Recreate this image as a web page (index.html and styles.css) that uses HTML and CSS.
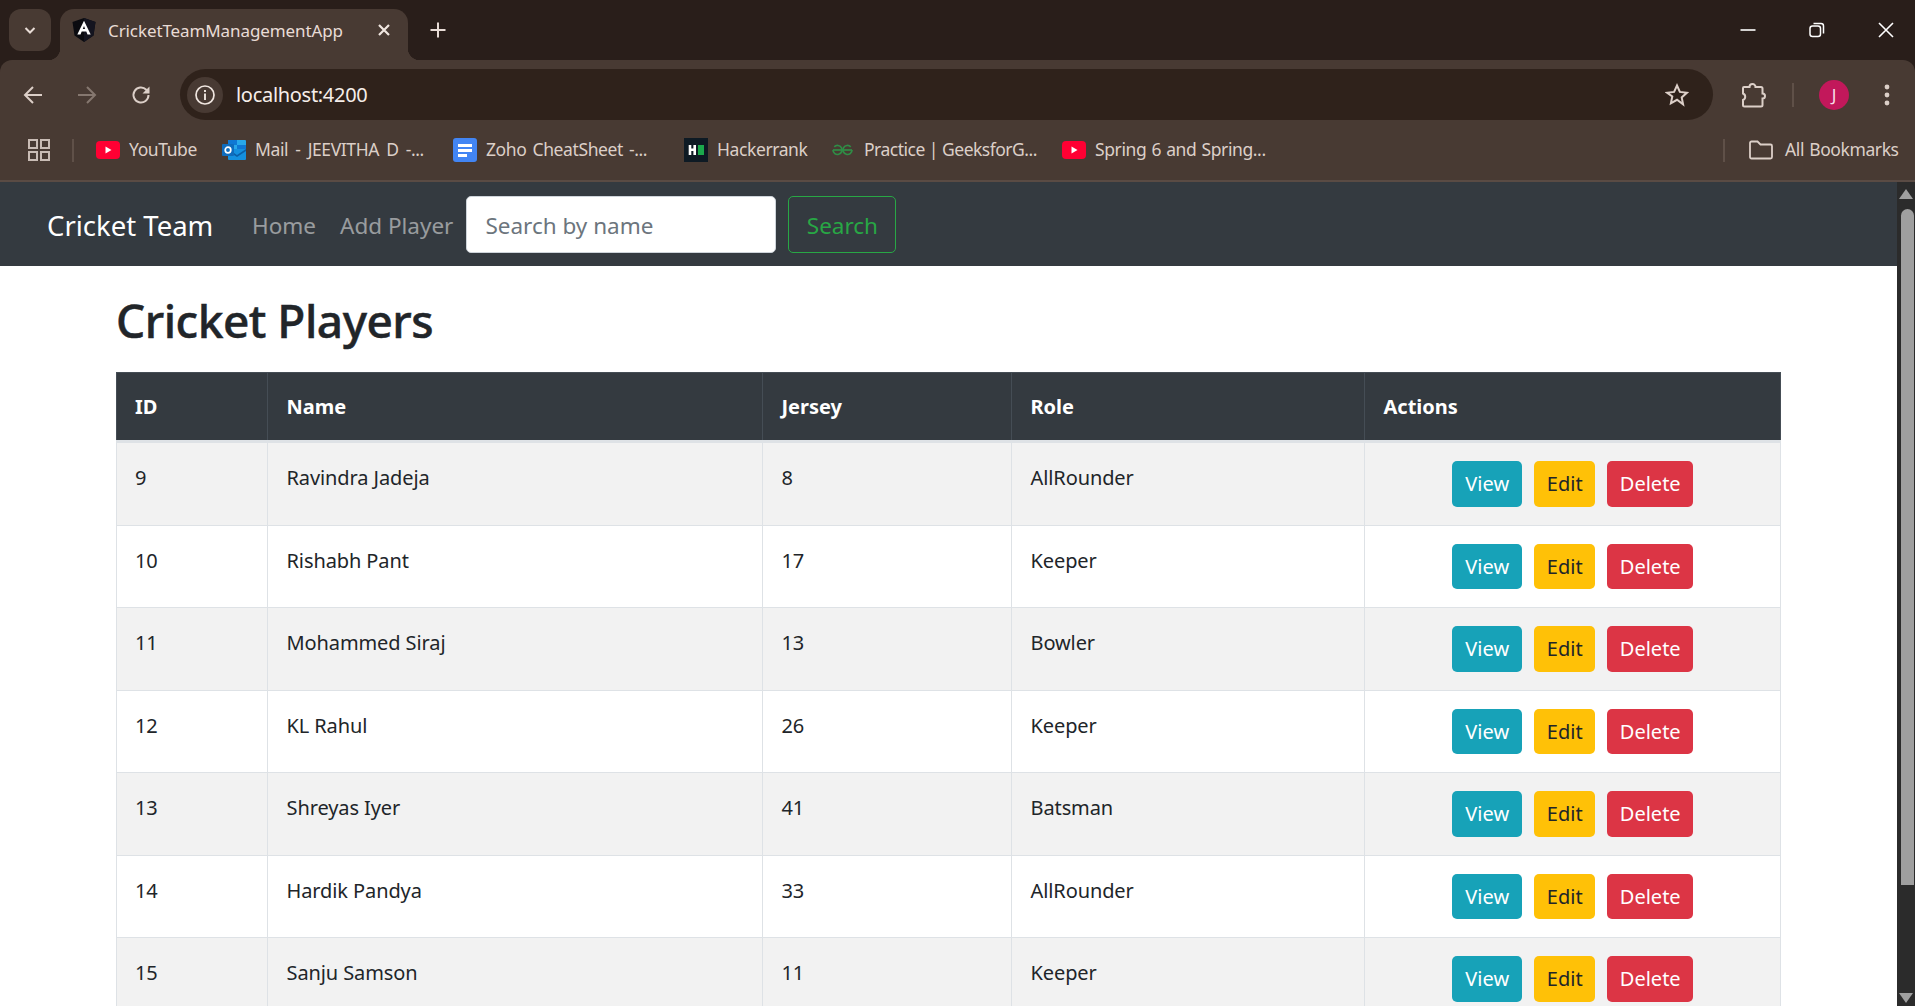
FILE: index.html
```html
<!DOCTYPE html>
<html lang="en">
<head>
    <meta charset="utf-8">
    <title>CricketTeamManagementApp</title>
    <link rel="stylesheet" href="styles.css">
</head>
<body>
<div class="tabstrip">
    <div class="tabsearch">
        <svg width="16" height="16" viewBox="0 0 16 16"><path d="M3.5 6l4.5 4.5L12.500 6" fill="none" stroke="#e8dcd6" stroke-width="2"/></svg>
    </div>
    <div class="tab">
        <svg class="tabicon" width="24" height="24" viewBox="0 0 24 24"><path d="M12 0L23.500 4l-2 13.500L12 24l-9.500-6.500L.5 4z" fill="#0b0b10"/><path d="M12 0L23.500 4l-2 13.500L12 24z" fill="#14141f"/><path d="M12 2.700L5.300 16.500h3.200l1.200-3h4.600l1.200 3h3.200zM10.800 11L12 8l1.200 3z" fill="#fff"/></svg>
        <span class="tabtitle">CricketTeamManagementApp</span>
        <svg class="tabclose" width="14" height="14" viewBox="0 0 14 14"><path d="M2 2l10 10M12 2L2 12" stroke="#f0e6e0" stroke-width="2.200"/></svg>
    </div>
    <svg class="newtab" width="18" height="18" viewBox="0 0 18 18"><path d="M9 1.500v15M1.500 9h15" stroke="#e8dcd6" stroke-width="2"/></svg>
    <div class="winbtns">
        <svg width="16" height="16" viewBox="0 0 16 16"><path d="M0.500 8h15" stroke="#fff" stroke-width="1.600"/></svg>
        <svg width="16" height="16" viewBox="0 0 16 16"><rect x="1" y="4" width="10.500" height="10.500" rx="2.500" fill="none" stroke="#fff" stroke-width="1.500"/><path d="M4.500 1.500h7.500a2.500 2.500 0 0 1 2.500 2.500v7.500" fill="none" stroke="#fff" stroke-width="1.500"/></svg>
        <svg width="16" height="16" viewBox="0 0 16 16"><path d="M1 1l14 14M15 1L1 15" stroke="#fff" stroke-width="1.600"/></svg>
    </div>
</div>

<div class="toolbar">
    <div class="navrow">
        <svg class="navicon back" width="22" height="22" viewBox="0 0 22 22"><path d="M20 11H3M11 3l-8 8 8 8" fill="none" stroke="#dccfc8" stroke-width="2"/></svg>
        <svg class="navicon fwd" width="22" height="22" viewBox="0 0 22 22"><path d="M2 11h17M11 3l8 8-8 8" fill="none" stroke="#85776f" stroke-width="2"/></svg>
        <svg class="navicon reload" width="22" height="22" viewBox="0 0 22 22"><path d="M18.500 11a7.500 7.500 0 1 1-2.200-5.300L18.500 8" fill="none" stroke="#dccfc8" stroke-width="2"/><path d="M19.500 2.500v7h-7z" fill="#dccfc8"/></svg>
        <div class="omnibox">
            <div class="infochip">
                <svg width="22" height="22" viewBox="0 0 22 22"><circle cx="11" cy="11" r="9" fill="none" stroke="#f0e6e0" stroke-width="1.700"/><path d="M11 9.500v6.500M11 6v2" stroke="#f0e6e0" stroke-width="1.900"/></svg>
            </div>
            <span class="url">localhost:4200</span>
            <svg class="star" width="24" height="24" viewBox="0 0 24 24"><path d="M12 2.500l2.900 6.400 7 .8-5.200 4.700 1.400 6.900L12 16.800l-6.100 3.500 1.400-6.900L2.100 9.700l7-.8z" fill="none" stroke="#dccfc8" stroke-width="2"/></svg>
        </div>
        <svg class="puzzle" width="26" height="26" viewBox="0 0 26 26"><path d="M4 5h5.500a3 3 0 0 1 6 0H21a1.500 1.500 0 0 1 1.500 1.500v5a2.500 2.500 0 0 1 0 5V23a1.500 1.500 0 0 1-1.500 1.500H4.500A1.500 1.500 0 0 1 3 23v-5a3.500 3.500 0 0 0 0-6.500V6A1 1 0 0 1 4 5z" fill="none" stroke="#dccfc8" stroke-width="2"/></svg>
        <span class="sep"></span>
        <div class="avatar">J</div>
        <svg class="kebab" width="6" height="24" viewBox="0 0 6 24"><circle cx="3" cy="4" r="2.400" fill="#dccfc8"/><circle cx="3" cy="12" r="2.400" fill="#dccfc8"/><circle cx="3" cy="20" r="2.400" fill="#dccfc8"/></svg>
    </div>
    <div class="bookmarks">
        <svg class="apps" width="22" height="22" viewBox="0 0 22 22"><g fill="none" stroke="#c9bcb5" stroke-width="2"><rect x="1" y="1" width="8" height="8"/><rect x="13" y="1" width="8" height="8"/><rect x="1" y="13" width="8" height="8"/><rect x="13" y="13" width="8" height="8"/></g></svg>
        <span class="sep short"></span>
        <div class="bm bm-yt">
            <svg width="24" height="18" viewBox="0 0 24 18"><rect width="24" height="18" rx="4" fill="#ff0033"/><path d="M9.500 5.500v7l6-3.500z" fill="#fff"/></svg>
            <span>YouTube</span>
        </div>
        <div class="bm bm-mail">
            <svg width="24" height="20" viewBox="0 0 24 20"><rect x="6" width="18" height="10" rx="1" fill="#28a8ea"/><rect x="6" width="9" height="5" fill="#0f78d4"/><rect x="15" y="5" width="9" height="5" fill="#0f78d4"/><path d="M6 9h18v10a1 1 0 0 1-1 1H7a1 1 0 0 1-1-1z" fill="#1490df"/><path d="M6 9l9 6 9-6v2l-9 6-9-6z" fill="#0a5fa8"/><rect y="4" width="12" height="12" rx="1" fill="#0f6cbd"/><circle cx="6" cy="10" r="2.800" fill="none" stroke="#fff" stroke-width="1.700"/></svg>
            <span>Mail - JEEVITHA D -...</span>
        </div>
        <div class="bm bm-zoho">
            <svg width="24" height="24" viewBox="0 0 24 24"><rect width="24" height="24" rx="3" fill="#4285f4"/><path d="M5 6h14v3H5zM5 11h14v3H5zM5 16h9v3H5z" fill="#fff"/></svg>
            <span>Zoho CheatSheet -...</span>
        </div>
        <div class="bm bm-hr">
            <svg width="24" height="24" viewBox="0 0 24 24"><rect width="24" height="24" fill="#0e1a24"/><path d="M4.700 7h2.600v3.500h2.100V7H12v10H9.400v-4H7.300v4H4.700z" fill="#fff"/><rect x="14" y="7" width="6" height="10" fill="#1ba94c"/></svg>
            <span>Hackerrank</span>
        </div>
        <div class="bm bm-gfg">
            <svg width="21" height="12" viewBox="0 0 21 12"><g fill="none" stroke="#2f8d46" stroke-width="1.700"><path d="M2.300 2.800A4.500 4.500 0 1 1 1 6"/><path d="M18.700 2.800A4.500 4.500 0 1 0 20 6"/><path d="M1 6H20"/></g></svg>
            <span>Practice | GeeksforG...</span>
        </div>
        <div class="bm bm-spring">
            <svg width="24" height="18" viewBox="0 0 24 18"><rect width="24" height="18" rx="4" fill="#ff0033"/><path d="M9.500 5.500v7l6-3.500z" fill="#fff"/></svg>
            <span>Spring 6 and Spring...</span>
        </div>
        <span class="sep short allsep"></span>
        <div class="bm bm-all">
            <svg width="24" height="20" viewBox="0 0 24 20"><path d="M1 3a1.500 1.500 0 0 1 1.500-1.500h6l3 3h10A1.500 1.500 0 0 1 23 6v11a1.500 1.500 0 0 1-1.500 1.500h-19A1.500 1.500 0 0 1 1 17z" fill="none" stroke="#dccfc8" stroke-width="1.800"/></svg>
            <span>All Bookmarks</span>
        </div>
    </div>
</div>

<div class="viewport">
    <div class="page">
        <nav class="navbar">
            <a class="brand">Cricket Team</a>
            <a class="navlink">Home</a>
            <a class="navlink">Add Player</a>
            <form class="searchform" action="javascript:">
                <input class="searchinput" type="text" placeholder="Search by name">
                <button class="searchbtn" type="button">Search</button>
            </form>
        </nav>
        <div class="container">
            <h1 class="title">Cricket Players</h1>
            <table class="players">
                <colgroup>
                    <col class="c-id"><col class="c-name"><col class="c-jersey"><col class="c-role"><col class="c-actions">
                </colgroup>
                <thead>
                    <tr><th>ID</th><th>Name</th><th>Jersey</th><th>Role</th><th>Actions</th></tr>
                </thead>
                <tbody>
                    <tr>
                        <td>9</td><td>Ravindra Jadeja</td><td>8</td><td>AllRounder</td>
                        <td class="actions"><button class="btn info">View</button><button class="btn warn">Edit</button><button class="btn danger">Delete</button></td>
                    </tr>
                    <tr>
                        <td>10</td><td>Rishabh Pant</td><td>17</td><td>Keeper</td>
                        <td class="actions"><button class="btn info">View</button><button class="btn warn">Edit</button><button class="btn danger">Delete</button></td>
                    </tr>
                    <tr>
                        <td>11</td><td>Mohammed Siraj</td><td>13</td><td>Bowler</td>
                        <td class="actions"><button class="btn info">View</button><button class="btn warn">Edit</button><button class="btn danger">Delete</button></td>
                    </tr>
                    <tr>
                        <td>12</td><td>KL Rahul</td><td>26</td><td>Keeper</td>
                        <td class="actions"><button class="btn info">View</button><button class="btn warn">Edit</button><button class="btn danger">Delete</button></td>
                    </tr>
                    <tr>
                        <td>13</td><td>Shreyas Iyer</td><td>41</td><td>Batsman</td>
                        <td class="actions"><button class="btn info">View</button><button class="btn warn">Edit</button><button class="btn danger">Delete</button></td>
                    </tr>
                    <tr>
                        <td>14</td><td>Hardik Pandya</td><td>33</td><td>AllRounder</td>
                        <td class="actions"><button class="btn info">View</button><button class="btn warn">Edit</button><button class="btn danger">Delete</button></td>
                    </tr>
                    <tr>
                        <td>15</td><td>Sanju Samson</td><td>11</td><td>Keeper</td>
                        <td class="actions"><button class="btn info">View</button><button class="btn warn">Edit</button><button class="btn danger">Delete</button></td>
                    </tr>
                </tbody>
            </table>
        </div>
    </div>
    <div class="scrollbar">
        <span class="arrow up"></span>
        <span class="thumb"></span>
        <span class="arrow down"></span>
    </div>
</div>
</body>
</html>
```

FILE: styles.css
```css
*{
    box-sizing: border-box;
    padding: 0;
    margin: 0;
}
html, body{
    height: 100%;
    overflow: hidden;
}
body{
    display: flex;
    flex-direction: column;
    background: #291e1a;
    font-family: "Noto Sans", "Liberation Sans", sans-serif;
    color: #212529;
}

/* browser top */
.tabstrip{
    display: flex;
    align-items: flex-start;
    height: 60px;
    padding: 9px 0 0 9px;
    flex: none;
}
.tabsearch{
    display: flex;
    align-items: center;
    justify-content: center;
    width: 42px;
    height: 42px;
    border-radius: 12px;
    background: #483a33;
}
.tab{
    position: relative;
    display: flex;
    align-items: center;
    width: 348px;
    height: 51px;
    margin-left: 9px;
    padding: 0 0 9px 12px;
    background: #483a33;
    border-radius: 14px 14px 0 0;
}
.tab::before, .tab::after{
    content: "";
    position: absolute;
    bottom: 0;
    width: 12px;
    height: 12px;
}
.tab::before{
    left: -12px;
    background: radial-gradient(circle at 0 0, #291e1a 12px, #483a33 12.500px);
}
.tab::after{
    right: -12px;
    background: radial-gradient(circle at 100% 0, #291e1a 12px, #483a33 12.500px);
}
.tabtitle{
    margin-left: 12px;
    width: 269px;
    font-size: 17px;
    letter-spacing: -0.1px;
    color: #e8dcd6;
    white-space: nowrap;
}
.newtab{
    margin: 12px 0 0 21px;
}
.winbtns{
    display: flex;
    gap: 53px;
    margin: 13px 21px 0 auto;
}
.winbtns svg{
    flex: none;
}
.toolbar{
    flex: none;
    height: 122px;
    background: #483a33;
    border-radius: 12px 12px 0 0;
    border-bottom: 2px solid #5a4b44;
}
.navrow{
    display: flex;
    align-items: center;
    height: 69px;
}
.navicon{
    flex: none;
}
.back{
    margin-left: 22px;
}
.fwd{
    margin-left: 32px;
}
.reload{
    margin-left: 32px;
}
.omnibox{
    display: flex;
    align-items: center;
    width: 1533px;
    height: 51px;
    margin-left: 28px;
    padding: 0 24px 0 7px;
    background: #2f221b;
    border-radius: 26px;
}
.infochip{
    display: flex;
    align-items: center;
    justify-content: center;
    width: 36px;
    height: 36px;
    border-radius: 50%;
    background: #483a33;
}
.url{
    margin-left: 13px;
    font-size: 20px;
    letter-spacing: -0.3px;
    color: #f6eeea;
}
.star{
    margin-left: auto;
}
.puzzle{
    margin-left: 27px;
}
.sep{
    width: 2px;
    height: 24px;
    margin-left: 26px;
    background: #5f5048;
}
.avatar{
    display: flex;
    align-items: center;
    justify-content: center;
    width: 30px;
    height: 30px;
    margin-left: 25px;
    border-radius: 50%;
    background: #c2185b;
    color: #f8dfe8;
    font-size: 17px;
}
.kebab{
    margin-left: 35px;
}
.bookmarks{
    display: flex;
    align-items: center;
    height: 42px;
    padding-left: 28px;
    color: #dccfc8;
    font-size: 17.500px;
    letter-spacing: -0.4px;
    word-spacing: 2px;
}
.apps{
    flex: none;
}
.sep.short{
    height: 23px;
    margin-left: 22px;
}
.bm{
    display: flex;
    align-items: center;
    gap: 9px;
    flex: none;
    white-space: nowrap;
}
.bm svg{
    flex: none;
}
.bm span{
    padding-bottom: 2px;
}
.bm-yt{ width: 126px; margin-left: 22px; }
.bm-mail{ width: 231px; word-spacing: 3px; }
.bm-zoho{ width: 231px; }
.bm-hr{ width: 148px; }
.bm-gfg{ width: 230px; letter-spacing: -0.5px; word-spacing: 0; }
.bm-gfg svg{ margin-right: 2px; }
.bm-spring{ width: 203px; word-spacing: 1px; }
.sep.allsep{
    margin-left: 458px;
}
.bm-all{
    gap: 12px;
    margin-left: 24px;
    word-spacing: 1px;
}

/* page */
.viewport{
    flex: 1;
    display: flex;
    min-height: 0;
    background: #fff;
}
.page{
    flex: 1;
    min-width: 0;
    overflow: hidden;
    font-size: 20px;
}
.navbar{
    display: flex;
    align-items: center;
    height: 84px;
    padding-left: 47px;
    background: #343a40;
}
.brand{
    width: 205px;
    padding-top: 2px;
    font-size: 27.500px;
    color: #fff;
}
.navlink{
    margin-right: 24px;
    padding-top: 2px;
    font-size: 22.500px;
    color: rgba(255,255,255,.5);
}
.navlink:nth-child(3){
    margin-right: 13px;
}
.searchform{
    display: flex;
    align-items: center;
    gap: 12px;
}
.searchinput{
    width: 310px;
    height: 57px;
    padding: 2px 18px 0;
    font: inherit;
    font-size: 22.500px;
    background: #fff;
    border: 1px solid #ced4da;
    border-radius: 5px;
}
.searchinput::placeholder{
    color: #6c757d;
}
.searchbtn{
    width: 108px;
    height: 57px;
    padding-top: 2px;
    font: inherit;
    font-size: 22.500px;
    color: #28a745;
    background: transparent;
    border: 1px solid #28a745;
    border-radius: 5px;
}
.container{
    width: 1665px;
    margin: 0 auto;
    padding-top: 24px;
}
.title{
    height: 60px;
    margin-bottom: 22px;
    font-size: 46px;
    font-weight: 500;
    letter-spacing: -0.5px;
    -webkit-text-stroke: 0.5px #212529;
    line-height: 60px;
}
.players{
    width: 100%;
    table-layout: fixed;
    border-collapse: collapse;
}
.c-id{ width: 150.500px; }
.c-name{ width: 495px; }
.c-jersey{ width: 249px; }
.c-role{ width: 353px; }
.players th{
    height: 69px;
    padding: 0 18px 0 19px;
    text-align: left;
    font-weight: 700;
    color: #fff;
    background: #343a40;
    border: 1px solid #454d55;
    border-bottom: 3px solid #dee2e6;
}
.players td{
    height: 82.500px;
    padding: 21px 18px 0 19px;
    vertical-align: top;
    letter-spacing: -0.1px;
    border: 1px solid #dee2e6;
}
.players tbody tr:first-child td{
    height: 83.500px;
}
.players th:first-child, .players td:first-child{
    padding-left: 18px;
}
.players tbody tr:nth-child(odd){
    background: #f2f2f2;
}
.players td.actions{
    padding-top: 0;
    vertical-align: middle;
    text-align: center;
    font-size: 0;
}
.btn{
    height: 45.500px;
    margin-left: 12px;
    font: inherit;
    font-size: 20px;
    color: #fff;
    border: none;
    border-radius: 5px;
}
.btn:first-child{
    margin-left: 0;
}
.info{ width: 70px; background: #17a2b8; }
.warn{ width: 61px; background: #ffc107; color: #212529; }
.danger{ width: 86px; background: #dc3545; }

.scrollbar{
    flex: none;
    display: flex;
    flex-direction: column;
    align-items: center;
    width: 18px;
    padding: 7px 0 3px;
    background: #2b2b2b;
}
.arrow{
    width: 0;
    height: 0;
    border-left: 7px solid transparent;
    border-right: 7px solid transparent;
}
.arrow.up{
    border-bottom: 10px solid #9f9f9f;
}
.arrow.down{
    margin-top: auto;
    border-top: 10px solid #9f9f9f;
}
.thumb{
    width: 13px;
    height: 676px;
    margin: 10px 0 0 3px;
    background: #9f9f9f;
    border-radius: 7px 7px 0 0;
}
```
